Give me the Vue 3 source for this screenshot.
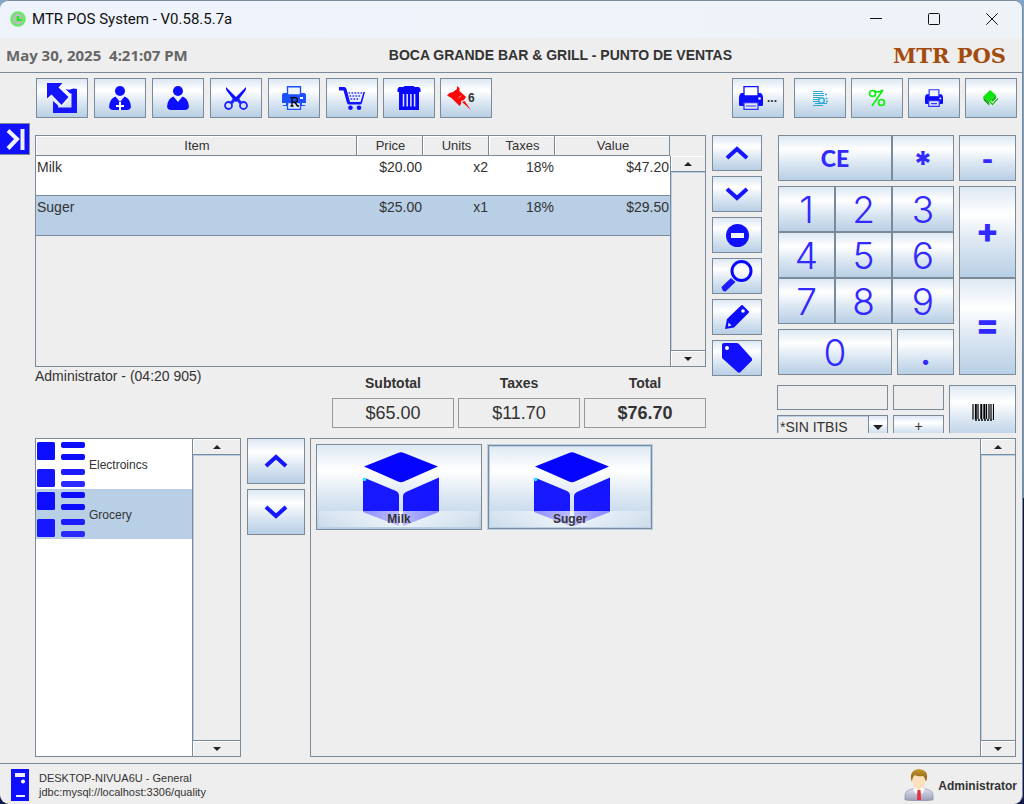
<script setup>
import { ref } from 'vue'

const lines = [
  { item: 'Milk', price: '$20.00', units: 'x2', taxes: '18%', value: '$47.20' },
  { item: 'Suger', price: '$25.00', units: 'x1', taxes: '18%', value: '$29.50' },
]
const selectedLine = ref(1)

const totals = [
  { id: 'subtotal', label: 'Subtotal', value: '$65.00' },
  { id: 'taxes', label: 'Taxes', value: '$11.70' },
  { id: 'total', label: 'Total', value: '$76.70', strong: true },
]

const categories = ['Electroincs', 'Grocery']
const selectedCategory = ref(1)

const products = ['Milk', 'Suger']
const focusedProduct = ref(1)

const keys = [
  { t: 'CE', c: 'op wide' },
  { t: '*', c: 'op star' },
  { t: '1' }, { t: '2' }, { t: '3' },
  { t: '4' }, { t: '5' }, { t: '6' },
  { t: '7' }, { t: '8' }, { t: '9' },
]
</script>

<template>
  <div class="desktop">
    <div class="window">
      <header class="titlebar">
        <svg class="app-icon" viewBox="0 0 16 16" aria-hidden="true">
          <circle cx="8" cy="8" r="7" fill="#8fd08f" stroke="#5cf25c" stroke-width="1.6" />
          <path d="M11 5.500A4 4 0 1 0 11.500 10" fill="none" stroke="#c9b5c9" stroke-width="1.600" />
          <path d="M8 5v4h4" fill="none" stroke="#19f019" stroke-width="2" />
        </svg>
        <h1>MTR POS System - V0.58.5.7a</h1>
        <button class="win-btn" aria-label="Minimize"><svg viewBox="0 0 12 12"><path d="M0 5.500h12" /></svg></button>
        <button class="win-btn" aria-label="Maximize"><svg viewBox="0 0 12 12"><rect x=".5" y=".5" width="11" height="11" rx="1" /></svg></button>
        <button class="win-btn" aria-label="Close"><svg viewBox="0 0 12 12"><path d="M.3.3l11.400 11.400M11.700.3L.3 11.700" /></svg></button>
      </header>

      <div class="banner">
        <time class="clock">May 30, 2025&nbsp; 4:21:07 PM</time>
        <h2>BOCA GRANDE BAR &amp; GRILL - PUNTO DE VENTAS</h2>
        <span class="brand">MTR POS</span>
      </div>

      <div class="workspace">
        <div class="rail">
          <button class="expand" aria-label="Show panel">
            <svg viewBox="0 0 28 28"><path d="M7 5.500l9 8.500-9 9.500" /><path d="M21.500 4v21" /></svg>
          </button>
        </div>

        <main class="content">
          <nav class="toolbar">
            <button class="btn tool" aria-label="Exit">
              <svg width="30" height="30" viewBox="0 0 30 30" fill="#1414ff"><path d="M18.500 6q4 1.500 6 0 2-1 5.500 0v24H6V18l5 4.500v2h13.500V10.500H23z" /><path d="M0 0h15.500L11.500 4.500 21.500 14 14.500 22 4.500 11.500 0 15.500z" stroke="#f6f9fc" stroke-width="2.500" paint-order="stroke" /></svg>
            </button>
            <button class="btn tool" aria-label="New customer">
              <svg width="22" height="24" viewBox="0 0 22 24" fill="#0d0dff"><circle cx="11" cy="5" r="5" /><path d="M6.500 10.500L11 16l4.500-5.500q6 2 6.500 10.500-1 3-4 3H4q-3 0-4-3 .5-8.500 6.500-10.500z" /><path d="M11 16v8M7 20h8" stroke="#fff" stroke-width="2" /></svg>
            </button>
            <button class="btn tool" aria-label="Customer">
              <svg width="22" height="24" viewBox="0 0 22 24" fill="#0d0dff"><circle cx="11" cy="5" r="5" /><path d="M6.500 10.500L11 16l4.500-5.500q6 2 6.500 10.500-1 3-4 3H4q-3 0-4-3 .5-8.500 6.500-10.500z" /></svg>
            </button>
            <button class="btn tool" aria-label="Cut">
              <svg width="24" height="24" viewBox="0 0 24 24"><path d="M2 1q-.5 2 .8 4l7.700 10 1.500 1 1.500-1 7.700-10q1.300-2 .8-4L12 11z" fill="#1010ff" /><g fill="none" stroke="#1a22ff" stroke-width="1.800"><path d="M10.500 13l-3 4M13.500 13l3 4" stroke-width="3" /><circle cx="4.500" cy="19.500" r="3.500" /><circle cx="19.500" cy="19.500" r="3.500" /></g></svg>
            </button>
            <button class="btn tool" aria-label="Reprint">
              <svg width="24" height="24" viewBox="0 0 24 24"><path d="M2 7h20q2 0 2 2v9q0 2-2 2H2q-2 0-2-2V9q0-2 2-2z" fill="#1c50ff" /><path d="M5.500.8h13V9h-13z" fill="#eef5fc" stroke="#1c50ff" stroke-width="1.400" /><rect x="18" y="11" width="3" height="2" fill="#fff" /><path d="M0 17h4v2H0zM20 17h4v2h-4z" fill="#dde8f3" /><path d="M5.500 16.500h13v7h-13z" fill="#dce8f4" stroke="#1c50ff" stroke-width="1.300" /><path d="M10 20V11.700h3.500q2 .3 2 2.300t-2 2.200H10M13 16.500l2.500 3.500h1.500M8.500 20h3M8.500 11.700h2" fill="none" stroke="#000" stroke-width="1.300" /></svg>
            </button>
            <button class="btn tool" aria-label="Cart">
              <svg width="26" height="24" viewBox="0 0 26 24" fill="#1212ff"><path d="M0 1h5q2 0 2.500 2l3.500 13h10.500L24.500 6H26l-3 11q-.5 1.500-2 1.500H10q-1.500 0-2-1.500L4.500 4.500H0z" /><path d="M9.500 7h14M10.500 10h12M11.500 13h9" stroke="#3030ff" stroke-width="1.700" stroke-dasharray="1.700 1.300" /><circle cx="11.500" cy="21.700" r="2.300" /><circle cx="20" cy="21.700" r="2.300" /></svg>
            </button>
            <button class="btn tool" aria-label="Delete">
              <svg width="24" height="24" viewBox="0 0 24 24" fill="#0808ff"><path d="M8 0h8q1 0 1.500 1H22l1.500 2v3H.5V3L2 1h4.500Q7 0 8 0z" /><path d="M2 6h20v18H2z" /><path d="M6.500 8v12.500M10.200 8v12.500M13.900 8v12.500M17.600 8v12.500" stroke="#dbe7fb" stroke-width="1.500" /></svg>
            </button>
            <button class="btn tool pin" aria-label="Pinned: 6">
              <svg width="24" height="24" viewBox="0 0 24 24" fill="#ff0505"><path d="M10 0l2.500 2v3L19 11l-2 3-3 1v3l-1.500 2Q10 17 8 15.500 4 11 0 9.500L2.500 7 6 6l4-3z" /><path d="M15 16l2.500-1L24 24z" /><path d="M11.500 12l3-2.500" stroke="#f99" /></svg>
              <span>6</span>
            </button>

            <span class="spacer"></span>

            <button class="btn tool more" aria-label="Printers">
              <svg width="24" height="24" viewBox="0 0 24 24"><path d="M2 7h20q2 2 2 4v8q0 1-2 1H2q-2 0-2-1v-8q0-2 2-4z" fill="#0c0cff" /><path d="M5 .6h14V10H5z" fill="#fff" stroke="#0c0cff" stroke-width="1.300" /><circle cx="20.500" cy="12.500" r="1.300" fill="#fff" /><path d="M5 16.600h14v6.800H5z" fill="#dde8f3" stroke="#3030ff" stroke-width="1.300" /><path d="M7 20h10" stroke="#3030ff" /></svg>
              <span>...</span>
            </button>
            <button class="btn tool" aria-label="Documents">
              <svg width="16" height="16" viewBox="0 0 16 16"><path d="M1 1.500h10M1 3.500h11M1 5.500h11M1 7.500h7M1 9.500h6M1 11.500h6M3 13.500h12M1 15.500h10" stroke="#2fa5d6" /><path d="M13 4.500h2M13.500 8.500h2M14 11.500h2" stroke="#36a8d8" stroke-width="1.300" /><circle cx="9.500" cy="10.500" r="2.800" fill="#cceefa" stroke="#38acd9" stroke-width="1.500" /></svg>
            </button>
            <button class="btn tool" aria-label="Discount">
              <svg width="18" height="18" viewBox="0 0 18 18" fill="none" stroke="#10ef10" stroke-width="1.700"><circle cx="4.500" cy="4.500" r="3" /><circle cx="13.500" cy="13.500" r="3" /><path d="M4 17L15 1M6 2q5 2 9-1" /></svg>
            </button>
            <button class="btn tool" aria-label="Print">
              <svg width="18" height="18" viewBox="0 0 24 24"><path d="M2 7h20q2 2 2 4v8q0 1-2 1H2q-2 0-2-1v-8q0-2 2-4z" fill="#0c0cff" /><path d="M5.500 1h13v9h-13z" fill="#eef4fa" stroke="#3030ff" stroke-width="1.600" /><circle cx="20.500" cy="12.500" r="1.300" fill="#fff" /><path d="M5 15.600h14v7.600H5z" fill="#dde8f3" stroke="#3030ff" stroke-width="1.600" /><path d="M8 19.500h8" stroke="#3030ff" stroke-width="1.500" /></svg>
            </button>
            <button class="btn tool" aria-label="Confirm">
              <svg width="16" height="16" viewBox="0 0 16 16"><path d="M7 0l6 5-7 7-6-5z" fill="#0be60b" /><path d="M0 7l6 5v3.500L1 10.500z" fill="#1fa51f" /><path d="M13 5v3.500L6 15v-3z" fill="#0eb80e" /><path d="M7 11.500l2.500 3.200L15 8.500" fill="none" stroke="#fff" stroke-width="3" /><path d="M7 11.500l2.500 3.200L15 8.500" fill="none" stroke="#1dbb1d" stroke-width="1.500" /></svg>
            </button>
          </nav>

          <section class="upper">
            <div class="sale">
              <div class="pane sale-pane">
                <div class="table-wrap">
                  <table>
                    <colgroup><col><col class="c66"><col class="c66"><col class="c66"><col class="c115"></colgroup>
                    <thead>
                      <tr><th>Item</th><th>Price</th><th>Units</th><th>Taxes</th><th>Value</th></tr>
                    </thead>
                    <tbody>
                      <tr v-for="(l, i) in lines" :key="l.item" :class="{ selected: i === selectedLine }" @click="selectedLine = i">
                        <td>{{ l.item }}</td><td>{{ l.price }}</td><td>{{ l.units }}</td><td>{{ l.taxes }}</td><td>{{ l.value }}</td>
                      </tr>
                    </tbody>
                  </table>
                </div>
                <div class="scrollbar under-header">
                  <button aria-label="Scroll up"><i class="tri up"></i></button>
                  <div class="track"></div>
                  <button aria-label="Scroll down"><i class="tri down"></i></button>
                </div>
              </div>
              <div class="summary">
                <p>Administrator - (04:20 905)</p>
                <div class="totals">
                  <div v-for="t in totals" :key="t.id" class="total">
                    <label :for="t.id">{{ t.label }}</label>
                    <input :id="t.id" :class="{ strong: t.strong }" :value="t.value" readonly>
                  </div>
                </div>
              </div>
            </div>

            <div class="side">
              <button class="btn" aria-label="Previous line"><svg width="24" height="14" viewBox="0 0 24 14" class="chev"><path d="M2 12L12 3l10 9" /></svg></button>
              <button class="btn" aria-label="Next line"><svg width="24" height="14" viewBox="0 0 24 14" class="chev"><path d="M2 2l10 9 10-9" /></svg></button>
              <button class="btn" aria-label="Remove line"><svg width="24" height="24" viewBox="0 0 24 24"><circle cx="12.500" cy="12.500" r="11.500" fill="#1010ff" /><path d="M6 10h13v5H6z" fill="#f2f6fb" /></svg></button>
              <button class="btn" aria-label="Search"><svg width="32" height="32" viewBox="0 0 32 32"><circle cx="20.500" cy="11" r="9.500" fill="none" stroke="#0808ff" stroke-width="3" /><path d="M.5 27L10 18l4.500 4L4.500 31.500q-3 .5-4-4.500z" fill="#1d1dff" /></svg></button>
              <button class="btn" aria-label="Edit"><svg width="24" height="24" viewBox="0 0 24 24"><path d="M16 .5q1-1 2 0L23.500 6q1 1 0 2L9 22.500 0 24l2-10z" fill="#0c0cff" /><circle cx="18" cy="6" r="1.800" fill="#fff" /><path d="M3.500 17.500l3 3-3.500 1z" fill="#dfe9f6" /></svg></button>
              <button class="btn" aria-label="Tag"><svg width="30" height="30" viewBox="0 0 30 30"><path d="M2 0h12q2 0 3 1l13 14.500q.5 1 0 2L18.500 29q-1.500 1.500-3 0L0 15V2q0-2 2-2z" fill="#1010ff" /><circle cx="5" cy="5" r="2" fill="#fff" /></svg></button>
            </div>

            <div class="pad">
              <div class="keypad">
                <button v-for="k in keys" :key="k.t" class="btn key" :class="[k.c, 'k' + (k.t === '*' ? 'star' : k.t)]">{{ k.t }}</button>
                <button class="btn key wide k0">0</button>
                <button class="btn key op kdot">.</button>
                <button class="btn key op kminus">-</button>
                <button class="btn key op sign kplus">+</button>
                <button class="btn key op sign kequal">=</button>
              </div>
              <div class="aux">
                <input aria-label="Code">
                <input aria-label="Quantity">
                <button class="btn barcode" aria-label="Barcode">
                  <svg width="22" height="17" viewBox="0 0 22 17"><path d="M1 0v15.500M3.500 0v15M6 0v15M9 0v15M12 0v15M14.500 0v15M17 0v15M19 0v15M21.500 0v16" stroke="#000" stroke-width="1.200" /><path d="M4 0v15M9.500 0v15M12.600 0v15" stroke="#000" stroke-width="1.500" /><path d="M3 16h17" stroke="#000" stroke-width="1.500" stroke-dasharray="2 1" /></svg>
                </button>
                <div class="combo">
                  <select aria-label="Tax type"><option>*SIN ITBIS</option></select>
                  <span class="drop"><i class="tri down big"></i></span>
                </div>
                <button class="btn plus">+</button>
              </div>
            </div>
          </section>

          <section class="lower">
            <div class="pane categories">
              <ul>
                <li v-for="(c, i) in categories" :key="c">
                  <button :class="{ selected: i === selectedCategory }" @click="selectedCategory = i">
                    <svg width="48" height="46" viewBox="0 0 48 46" fill="#0c0cff"><rect width="18" height="18" rx="1.500" /><rect y="27" width="18" height="18" rx="1.500" fill="#1717ff" /><rect x="24" width="24" height="6" rx="2" /><rect x="24" y="12" width="24" height="6" rx="2" /><rect x="24" y="27" width="24" height="6" rx="2" fill="#1c1cff" /><rect x="24" y="39" width="24" height="6" rx="2" fill="#2a2aff" /></svg>
                    {{ c }}
                  </button>
                </li>
              </ul>
              <div class="scrollbar wide-bar">
                <button aria-label="Scroll up"><i class="tri up"></i></button>
                <div class="track"></div>
                <button aria-label="Scroll down"><i class="tri down"></i></button>
              </div>
            </div>

            <div class="pager">
              <button class="btn" aria-label="Previous category"><svg width="24" height="14" viewBox="0 0 24 14" class="chev"><path d="M2 12L12 3l10 9" /></svg></button>
              <button class="btn" aria-label="Next category"><svg width="24" height="14" viewBox="0 0 24 14" class="chev"><path d="M2 2l10 9 10-9" /></svg></button>
            </div>

            <div class="pane catalog">
              <div class="products">
                <button v-for="(p, i) in products" :key="p" class="btn product" :class="{ focused: i === focusedProduct }" @click="focusedProduct = i">
                  <svg width="80" height="76" viewBox="-4 0 80 76"><path d="M1 15.500L35 2q3-1.500 6 0l34 13.500L41 30.500q-3 1.500-6 0z" fill="#0505ff" /><path d="M0 27l3 .5L33 40q3 1.500 3 4v31L0 61z" fill="#1818ff" /><path d="M76 26.500L43 41q-3 1.500-3 4v30l36-14z" fill="#1515ff" /><circle cx="1.500" cy="28.500" r="1.800" fill="#2be3f5" /></svg>
                  <span>{{ p }}</span>
                </button>
              </div>
              <div class="scrollbar">
                <button aria-label="Scroll up"><i class="tri up"></i></button>
                <div class="track"></div>
                <button aria-label="Scroll down"><i class="tri down"></i></button>
              </div>
            </div>
          </section>
        </main>
      </div>

      <footer>
        <svg width="18" height="32" viewBox="0 0 18 32"><rect width="18" height="32" fill="#0f0fff" /><path d="M4 4h10v4H4zM5 26h9v2H5z" fill="#eef" /><circle cx="12" cy="12.500" r="2" fill="#fff" /></svg>
        <p class="host">DESKTOP-NIVUA6U - General<br>jdbc:mysql://localhost:3306/quality</p>
        <svg width="30" height="32" viewBox="0 0 30 32">
          <defs><linearGradient id="hair" x2="0" y2="1"><stop stop-color="#c99a2e" /><stop offset="1" stop-color="#7c5410" /></linearGradient><linearGradient id="coat" x2="0" y2="1"><stop stop-color="#e4e4f0" /><stop offset="1" stop-color="#9a9ab8" /></linearGradient></defs>
          <path d="M1 31q-1-9 4-10l7-2h6l7 2q5 1 4 10-14 2-28 0z" fill="url(#coat)" stroke="#8b8ba8" stroke-width=".6" />
          <path d="M10 18l5 4 5-4v-3H10z" fill="#f8cfa2" /><path d="M9 20l3-2 3 3-3 4zM21 20l-3-2-3 3 3 4z" fill="#fff" />
          <path d="M13.500 21h3l.5 10h-4z" fill="#e8303c" />
          <ellipse cx="15" cy="11" rx="7" ry="8" fill="#fde0bd" />
          <path d="M8 13Q5 5 10 1.500q5-3 10 0 5 3 2 11-1-4-3-5.500-6 1-8-1-3 2-3 7z" fill="url(#hair)" />
        </svg>
        <strong>Administrator</strong>
      </footer>
    </div>
  </div>
</template>

<style>
body { margin: 0; }
</style>

<style scoped>
* { box-sizing: border-box; }
.desktop {
  min-height: 100vh;
  display: flex;
  padding-right: 1px;
  background: linear-gradient(#7fa6c9 0, #7391b3 62%, #0a1440 62%, #101a4a 100%);
  font-family: "Liberation Sans", Arial, sans-serif;
  font-size: 14px;
  color: #333;
}
button, input, select { font: inherit; color: inherit; margin: 0; padding: 0; border-radius: 0; }
h1, h2, p, ul { margin: 0; padding: 0; font-weight: normal; }
svg { display: block; flex: none; }

.window {
  flex: 1;
  min-width: 0;
  display: flex;
  flex-direction: column;
  background: #eee;
  border: solid #7a8a99;
  border-width: 1px 1px 0 0;
  border-radius: 9px;
  overflow: hidden;
}
.titlebar {
  display: flex;
  align-items: center;
  height: 37px;
  padding: 0 1px 1px 10px;
  background: linear-gradient(90deg, #eff3fc, #eef3f8);
}
.app-icon { width: 16px; height: 16px; }
h1 { flex: 1; margin-left: 6px; font: 15px Roboto, sans-serif; color: #111; white-space: nowrap; }
.win-btn { width: 58px; height: 36px; border: 0; background: none; display: grid; place-items: center; }
.win-btn svg { width: 12px; height: 12px; fill: none; stroke: #111; stroke-width: 1; overflow: visible; }

.banner {
  display: flex;
  align-items: center;
  height: 35px;
  padding: 0 16px 0 6px;
  border-bottom: 1px solid #7a8a99;
  white-space: nowrap;
}
.clock { font: bold 15px "Noto Sans", sans-serif; color: #666; }
h2 { flex: 1; padding-left: 40px; font-size: 14px; font-weight: bold; text-align: center; }
.brand { font: bold 21px "DejaVu Serif", serif; color: #a34b0c; }

.workspace { flex: 1; display: flex; }
.rail { width: 30px; padding-top: 50px; }
.expand { width: 30px; height: 32px; border: 1px solid #7a8a99; border-left: 0; background: #1010ff; display: grid; place-items: center; }
.expand svg { width: 28px; height: 28px; fill: none; stroke: #eef2fa; stroke-width: 4; }
.content { flex: 1; min-width: 0; display: flex; flex-direction: column; padding: 5px 6px 6px 5px; }

.btn {
  display: flex;
  align-items: center;
  justify-content: center;
  border: 1px solid #7a8a99;
  background: linear-gradient(#dde8f3, #fff 30%, #dde8f3 60%, #b8cfe5);
}
.toolbar { display: flex; gap: 6px; margin: 0 -1px 17px 1px; }
.tool { width: 52px; height: 40px; }
.tool:nth-of-type(n + 7) { margin-left: -1px; }
.pin { justify-content: flex-start; padding-left: 6px; font-size: 12px; font-weight: bold; }
.pin span { margin-left: -3px; }
.spacer { flex: 1; }
.toolbar .more { gap: 4px; margin-right: 5px; font-size: 12px; font-weight: bold; }

.upper { display: flex; }
.sale { flex: 1; min-width: 0; }
.pane { display: flex; border: 1px solid #7a8a99; }
.sale-pane { height: 232px; }
.table-wrap { flex: 1; min-width: 0; }
table { width: 100%; border-collapse: separate; border-spacing: 0; table-layout: fixed; }
.c66 { width: 66px; }
.c115 { width: 115px; }
th {
  height: 20px;
  padding: 1px 0 0 2px;
  border: solid #7a8a99;
  border-width: 0 1px 1px 0;
  box-shadow: inset 1px 1px #fff;
  font-size: 13px;
  line-height: 18px;
  font-weight: normal;
}
td { height: 40px; padding: 3px 1px; border-bottom: 1px solid #7a8a99; background: #fff; line-height: 16px; text-align: right; vertical-align: top; }
td:first-child { text-align: left; }
.selected td { background: #b8cfe5; }

.scrollbar { width: 35px; display: flex; flex-direction: column; border-left: 1px solid #7a8a99; }
.wide-bar { width: 48px; }
.under-header { margin-top: 20px; }
.scrollbar button { height: 16px; border: solid #7a8a99; border-width: 0 0 1px; background: #eee; box-shadow: inset 1px 1px #fff; display: grid; place-items: center; }
.scrollbar button:last-child { border-width: 1px 0 0; }
.track { flex: 1; box-shadow: inset 1px 1px #b8cfe5; }
.tri { width: 0; height: 0; border: 4px solid transparent; }
.up { border-top: 0; border-bottom-color: #222; }
.down { border-bottom: 0; border-top-color: #222; }
.big { border-width: 5px 5px 0; }

.summary { display: flex; justify-content: space-between; line-height: 18px; white-space: nowrap; }
.totals { display: flex; gap: 4px; padding-top: 7px; }
.total { width: 122px; display: flex; flex-direction: column; gap: 6px; text-align: center; }
.total label { font-weight: bold; }
.total input { width: 100%; height: 30px; border: 1px solid #999; background: #eee; text-align: center; font-size: 18px; }
.total .strong { font-weight: bold; }

.side { width: 50px; margin-left: 6px; display: flex; flex-direction: column; gap: 5px; }
.side .btn { height: 36px; }
.chev { fill: none; stroke: #1515ff; stroke-width: 4; overflow: visible; }

.pad { width: 239px; margin-left: 15px; }
.keypad {
  display: grid;
  grid-template-columns: 57px 57px 5px 57px 5px 57px;
  grid-template-rows: 46px 5px 46px 46px 46px 5px 46px;
  margin: 0 0 10px 1px;
}
.key { color: #3129ff; font: 300 37px Inter, sans-serif; }
.op { font: 900 23px Lato, sans-serif; }
.sign { font: 800 34px Inter, sans-serif; padding-bottom: 4px; }
.kCE { grid-area: 1 / 1 / 2 / 3; }
.kstar { grid-area: 1 / 3 / 2 / 5; font: 800 34px Inter, sans-serif; padding-top: 10px; }
.k1 { grid-area: 3 / 1; }
.k2 { grid-area: 3 / 2; }
.k3 { grid-area: 3 / 3 / 4 / 5; }
.k4 { grid-area: 4 / 1; }
.k5 { grid-area: 4 / 2; }
.k6 { grid-area: 4 / 3 / 5 / 5; }
.k7 { grid-area: 5 / 1; }
.k8 { grid-area: 5 / 2; }
.k9 { grid-area: 5 / 3 / 6 / 5; }
.k0 { grid-area: 7 / 1 / 8 / 3; }
.kdot { grid-area: 7 / 4; font-size: 32px; }
.kminus { grid-area: 1 / 6; font-size: 32px; }
.kplus { grid-area: 3 / 6 / 5 / 7; }
.kequal { grid-area: 5 / 6 / 8 / 7; }

.aux {
  display: grid;
  grid-template-columns: 111px 51px 67px;
  grid-template-rows: 25px 25px;
  gap: 5px;
  height: 48px;
  overflow: hidden;
}
.aux input { width: 100%; border: 1px solid #7a8a99; background: #eee; }
.barcode { grid-area: 1 / 3 / 3 / 4; }
.combo { display: grid; grid-template-columns: 1fr 19px; border: 1px solid #7a8a99; box-shadow: inset 1px 1px #b8cfe5; }
.combo select { grid-area: 1 / 1 / 2 / 3; appearance: none; border: 0; padding: 0 0 2px 2px; background: none; }
.drop { grid-area: 1 / 2; display: grid; place-items: center; border-left: 1px solid #7a8a99; background: linear-gradient(#dde8f3, #fff 30%, #dde8f3 60%, #b8cfe5); pointer-events: none; }
.plus { align-items: flex-start; padding-top: 3px; line-height: 14px; }

.lower { flex: 1; display: flex; margin-top: 5px; }
.categories { width: 206px; }
ul { flex: 1; list-style: none; background: #fff; }
li button { width: 100%; height: 50px; border: 0; padding: 2px 0 0 1px; background: #fff; display: flex; align-items: center; gap: 4px; font-size: 12px; }
li .selected { background: #b8cfe5; }
.pager { width: 58px; margin: 0 5px 0 6px; display: flex; flex-direction: column; gap: 5px; }
.pager .btn { height: 46px; }
.catalog { flex: 1; min-width: 0; }
.products { flex: 1; display: flex; flex-wrap: wrap; align-content: flex-start; gap: 5px; padding: 5px; }
.product { width: 166px; height: 86px; padding: 6px 2px 2px; display: grid; grid-template-columns: 1fr; align-items: start; justify-items: center; }
.product svg, .product span { grid-area: 1 / 1; }
.product span { align-self: end; justify-self: stretch; line-height: 16px; background: linear-gradient(90deg, #ffffff40, #ffffffb8 50%, #ffffff40); font-size: 12px; font-weight: bold; }
.focused { border-color: #b8cfe5; box-shadow: inset 0 0 0 1px #7a8a99, inset 0 0 0 2px #b8cfe5; }

footer { display: flex; align-items: center; height: 41px; padding: 1px 5px 0 11px; border-top: 1px solid #7a8a99; }
.host { flex: 1; margin-left: 10px; font-size: 11px; line-height: 14px; }
footer strong { margin-left: 4px; padding-top: 2px; font-size: 12px; }
</style>
